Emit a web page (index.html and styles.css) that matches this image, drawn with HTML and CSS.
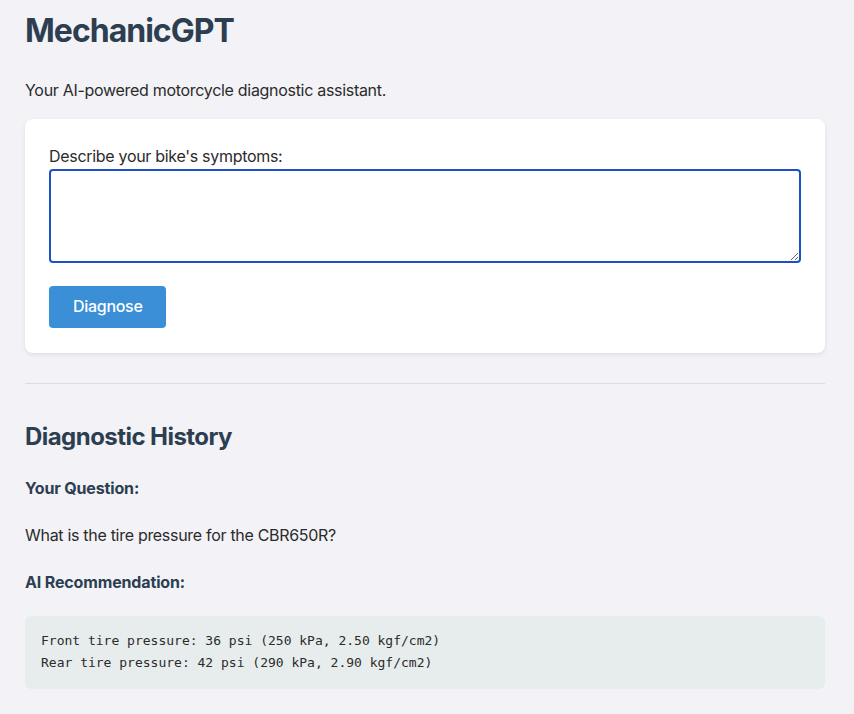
FILE: index.html
```html
<!DOCTYPE html>
<html lang="en">
<head>
<meta charset="utf-8">
<title>MechanicGPT</title>
<link rel="stylesheet" href="styles.css">
</head>
<body>
<main class="page">
  <h1 class="title">MechanicGPT</h1>
  <p class="subtitle">Your AI-powered motorcycle diagnostic assistant.</p>

  <form class="card">
    <label class="field-label" for="symptoms">Describe your bike's symptoms:</label>
    <textarea id="symptoms" class="symptoms" rows="4"></textarea>
    <button type="button" class="btn">Diagnose</button>
  </form>

  <hr class="divider">

  <section class="history">
    <h2 class="history-title">Diagnostic History</h2>
    <h4 class="entry-label">Your Question:</h4>
    <p class="entry-text">What is the tire pressure for the CBR650R?</p>
    <h4 class="entry-label">AI Recommendation:</h4>
    <pre class="answer">Front tire pressure: 36 psi (250 kPa, 2.50 kgf/cm2)
Rear tire pressure: 42 psi (290 kPa, 2.90 kgf/cm2)</pre>
  </section>
</main>
</body>
</html>
```

FILE: styles.css
```css
html, body {
  margin: 0;
  padding: 0;
  background: #f2f2f7;
}

body {
  font-family: Inter, "Noto Sans", sans-serif;
  font-size: 16px;
  line-height: 1.6;
  letter-spacing: -0.3px;
  color: #2b2b2b;
}

.page {
  width: 800px;
  padding: 5px 25px 40px;
}

.title {
  margin: 0 0 22px;
  font-size: 32px;
  font-weight: 700;
  color: #2c3e50;
  letter-spacing: -1px;
}

.subtitle {
  margin: 0 0 15px;
}

.card {
  display: flex;
  flex-direction: column;
  align-items: flex-start;
  background: #ffffff;
  border-radius: 8px;
  box-shadow: 0 2px 5px rgba(0, 0, 0, 0.08);
  padding: 25px 24px 25px;
}

.field-label {
  display: block;
}

.symptoms {
  box-sizing: border-box;
  width: 100%;
  height: 94px;
  border: 2px solid #1d50c4;
  border-radius: 4px;
  outline: none;
  font: inherit;
  padding: 8px;
  margin: 0;
}

.btn {
  margin-top: 23px;
  background: #3a8fd6;
  color: #ffffff;
  border: none;
  border-radius: 4px;
  padding: 8px 24px;
  font-family: inherit;
  font-size: 16px;
  line-height: 1.6;
  letter-spacing: -0.3px;
  font-weight: 500;
}

.divider {
  border: none;
  border-top: 1px solid #dcdce0;
  margin: 30px 0 34px;
}

.history-title {
  margin: 0 0 20px;
  font-size: 24px;
  font-weight: 700;
  color: #2c3e50;
  letter-spacing: -0.55px;
}

.entry-label {
  margin: 21px 0;
  font-size: 16px;
  font-weight: 700;
  color: #2c3e50;
  letter-spacing: -0.15px;
}

.entry-label:first-of-type {
  margin-top: 0;
}

.entry-text {
  margin: 0;
}

.answer {
  margin: 0;
  background: #e7eded;
  border-radius: 6px;
  padding: 14px 16px 15px;
  font-family: "DejaVu Sans Mono", monospace;
  font-size: 13px;
  line-height: 22px;
  letter-spacing: 0;
  color: #2b2b2b;
}
```
